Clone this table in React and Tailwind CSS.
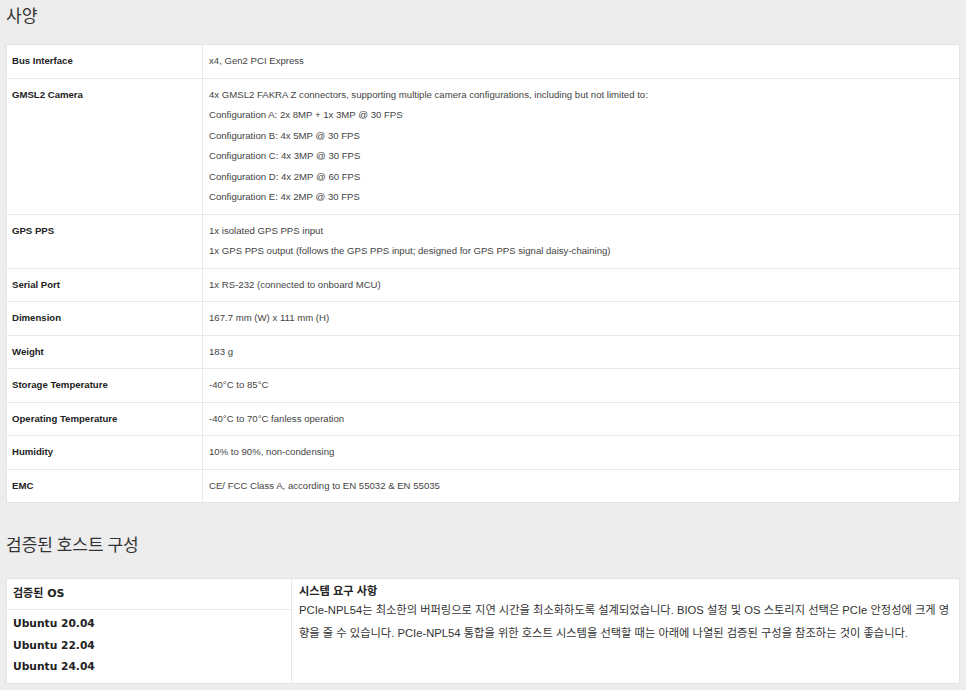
const specs = [
  { label: "Bus Interface", lines: ["x4, Gen2 PCI Express"] },
  {
    label: "GMSL2 Camera",
    lines: [
      "4x GMSL2 FAKRA Z connectors, supporting multiple camera configurations, including but not limited to:",
      "Configuration A: 2x 8MP + 1x 3MP @ 30 FPS",
      "Configuration B: 4x 5MP @ 30 FPS",
      "Configuration C: 4x 3MP @ 30 FPS",
      "Configuration D: 4x 2MP @ 60 FPS",
      "Configuration E: 4x 2MP @ 30 FPS"
    ]
  },
  {
    label: "GPS PPS",
    lines: [
      "1x isolated GPS PPS input",
      "1x GPS PPS output (follows the GPS PPS input; designed for GPS PPS signal daisy-chaining)"
    ]
  },
  { label: "Serial Port", lines: ["1x RS-232 (connected to onboard MCU)"] },
  { label: "Dimension", lines: ["167.7 mm (W) x 111 mm (H)"] },
  { label: "Weight", lines: ["183 g"] },
  { label: "Storage Temperature", lines: ["-40°C to 85°C"] },
  { label: "Operating Temperature", lines: ["-40°C to 70°C fanless operation"] },
  { label: "Humidity", lines: ["10% to 90%, non-condensing"] },
  { label: "EMC", lines: ["CE/ FCC Class A, according to EN 55032 & EN 55035"] }
];

const osList = ["Ubuntu 20.04", "Ubuntu 22.04", "Ubuntu 24.04"];

export default function App() {
  return (
    <div className="min-h-screen bg-[#ededed] px-[6px] pb-[8px]">
      <h2 className="pt-[4px] text-[17px] leading-[22px] font-normal text-[#333] font-['Noto_Sans_CJK_KR',sans-serif]">사양</h2>

      <div className="mt-[18px] border border-[#e4e4e4] bg-white font-['Liberation_Sans',Arial,sans-serif] text-[9.6px]">
        {specs.map((row, i) => (
          <div key={row.label} className={`flex ${i < specs.length - 1 ? "border-b border-[#e8e8e8]" : ""}`}>
            <div className="w-[196px] shrink-0 border-r border-[#e8e8e8] px-[5px] py-[6px] leading-[20.5px] font-bold text-[#222]">
              {row.label}
            </div>
            <div className="flex-1 px-[6px] py-[6px] leading-[20.5px] text-[#444]">
              {row.lines.map((line) => (
                <p key={line}>{line}</p>
              ))}
            </div>
          </div>
        ))}
      </div>

      <h2 className="mt-[30px] text-[17px] leading-[22px] font-normal text-[#333] font-['Noto_Sans_CJK_KR',sans-serif]">검증된 호스트 구성</h2>

      <div className="mt-[23px] flex border border-[#e4e4e4] bg-white">
        <div className="w-[285px] shrink-0 border-r border-[#e8e8e8] font-['DejaVu_Sans','Noto_Sans_CJK_KR',sans-serif] font-bold text-[#222]">
          <div className="border-b border-[#e8e8e8] px-[6px] py-[7px] text-[11px] leading-[16px]">검증된 OS</div>
          <div className="px-[6px] pt-[3px] pb-[5px] text-[10.7px] leading-[21.5px]">
            {osList.map((os) => (
              <p key={os}>{os}</p>
            ))}
          </div>
        </div>
        <div className="flex-1 px-[7px] pt-[4px] pb-[8px] font-['Liberation_Sans','Noto_Sans_CJK_KR',sans-serif] text-[#222]">
          <div className="text-[11.2px] leading-[16px] font-bold">시스템 요구 사항</div>
          <p className="text-[11.25px] leading-[23px] text-[#333]">
            PCIe-NPL54는 최소한의 버퍼링으로 지연 시간을 최소화하도록 설계되었습니다. BIOS 설정 및 OS 스토리지 선택은 PCIe 안정성에 크게 영향을 줄 수 있습니다. PCIe-NPL54 통합을 위한 호스트 시스템을 선택할 때는 아래에 나열된 검증된 구성을 참조하는 것이 좋습니다.
          </p>
        </div>
      </div>
    </div>
  );
}
